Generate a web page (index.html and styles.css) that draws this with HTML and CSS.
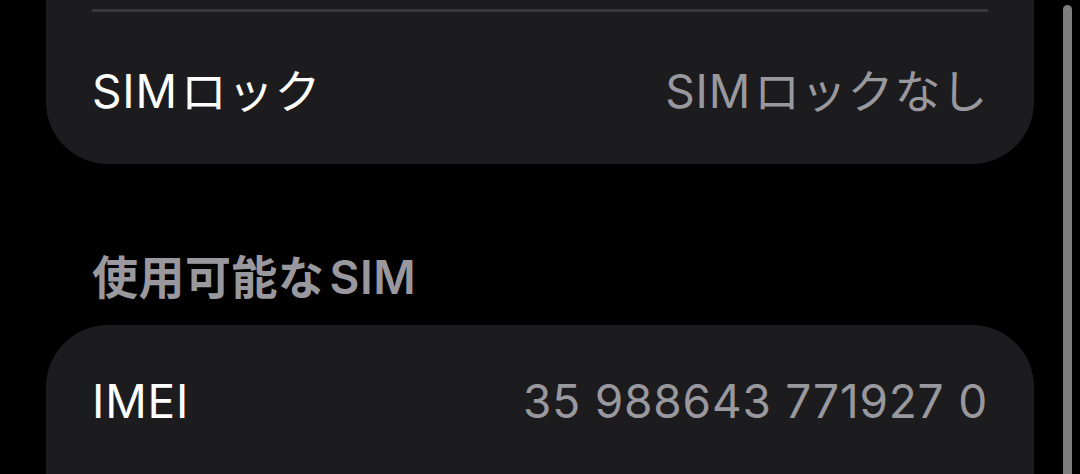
FILE: index.html
```html
<!DOCTYPE html>
<html lang="ja">
<head>
    <meta charset="UTF-8">
    <meta name="viewport" content="width=device-width, initial-scale=1.0">
    <title>情報</title>
    <link rel="stylesheet" href="styles.css">
</head>
<body>
    <div class="page">
        <div class="group group-top">
            <div class="divider"></div>
            <div class="row">
                <span class="label"><span class="latin">SIM</span>ロック</span>
                <span class="value"><span class="latin">SIM</span>ロックなし</span>
            </div>
        </div>

        <h2 class="section-title">使用可能な<span class="latin-before">SIM</span></h2>

        <div class="group group-bottom">
            <div class="row">
                <span class="label">IMEI</span>
                <span class="value">35 988643 771927 0</span>
            </div>
        </div>
    </div>

    <div class="scrollbar"></div>
</body>
</html>
```

FILE: styles.css
```css
* {
    margin: 0;
    padding: 0;
    box-sizing: border-box;
    font-family: Inter, "Noto Sans CJK JP", sans-serif;
}

body {
    background-color: #000;
    height: 474px;
    overflow: hidden;
}

.page {
    padding: 0 46px;
}

.group {
    background-color: #1c1c1e;
}

.group-top {
    padding: 9px 46px 0;
    border-radius: 0 0 62px 62px;
}

.group-bottom {
    padding: 0 46px;
    border-radius: 62px 62px 0 0;
    height: 160px;
}

.divider {
    height: 3px;
    background-color: #38383a;
}

.row {
    display: flex;
    justify-content: space-between;
    align-items: center;
    height: 152px;
    font-size: 46px;
    letter-spacing: 0.8px;
}

.latin {
    margin-right: 3px;
}

.latin-before {
    margin-left: 5px;
}

.label {
    color: #fff;
}

.value {
    color: #98989e;
}

.section-title {
    color: #98989e;
    font-size: 46px;
    font-weight: 600;
    letter-spacing: 0.5px;
    padding: 87px 0 0 46px;
    height: 161px;
    line-height: 52px;
}

.scrollbar {
    position: absolute;
    top: 5px;
    right: 8px;
    width: 9px;
    height: 480px;
    border-radius: 5px;
    background-color: #7e7e7e;
}
```
